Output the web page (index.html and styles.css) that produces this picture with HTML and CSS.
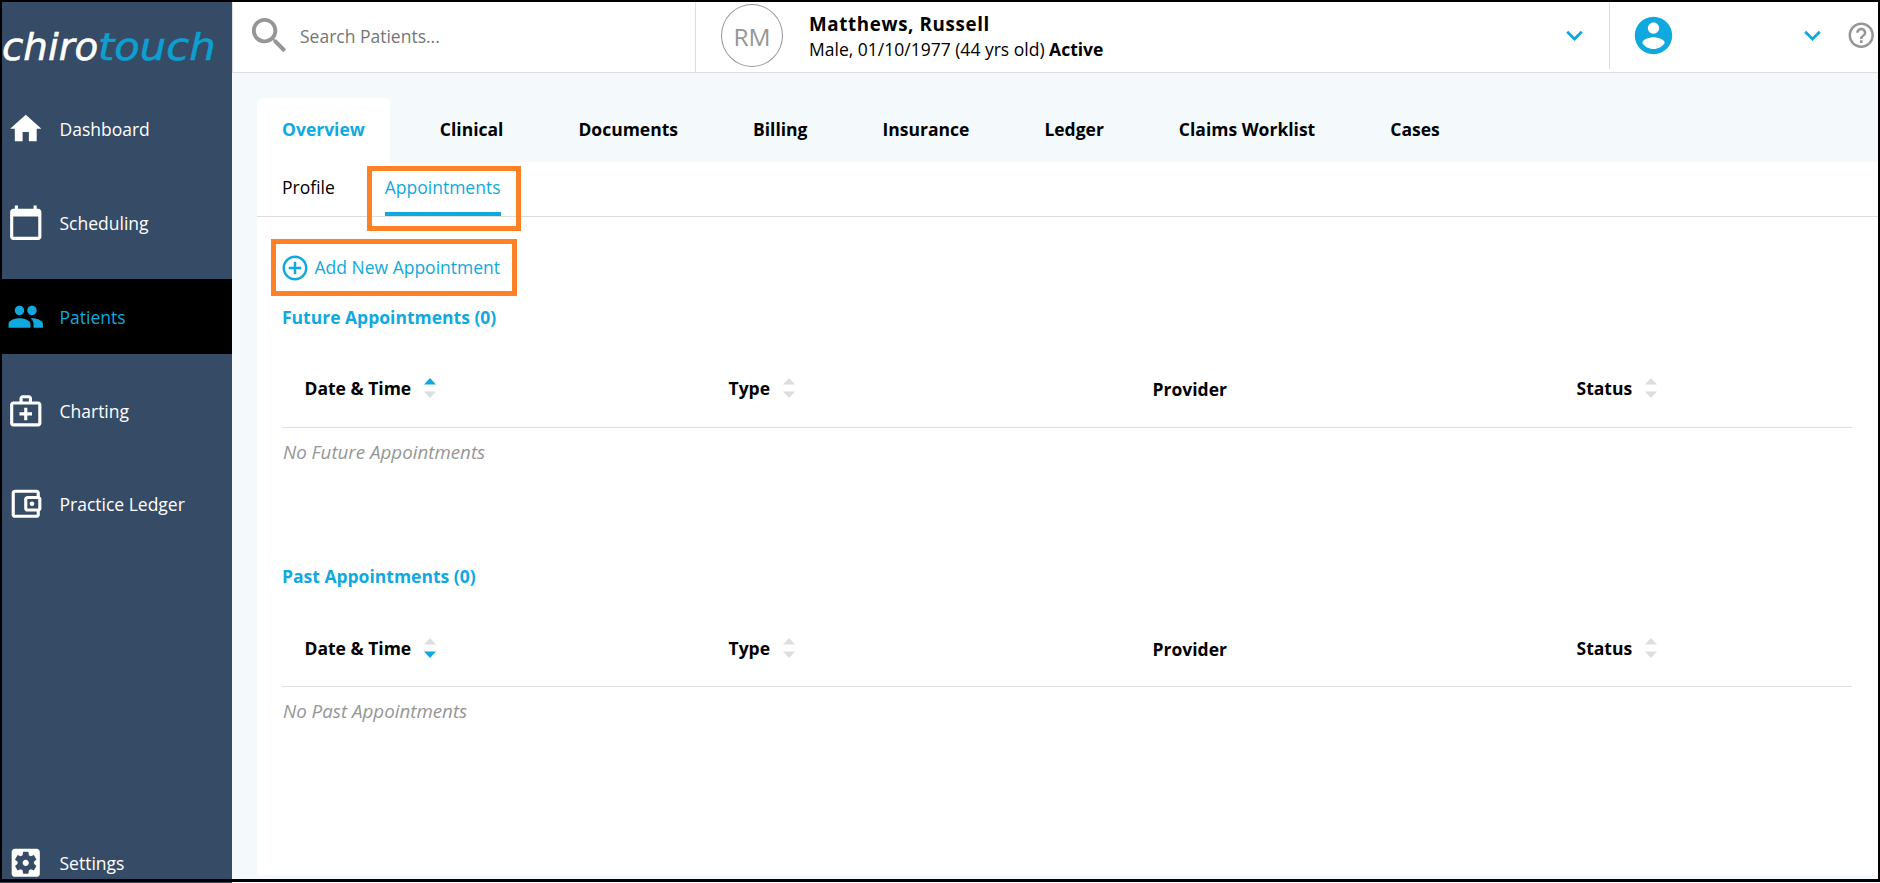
FILE: index.html
```html
<!DOCTYPE html>
<html lang="en">
<head>
<meta charset="utf-8">
<title>ChiroTouch - Appointments</title>
<link rel="stylesheet" href="styles.css">
</head>
<body>
<div class="app">
  <nav class="sidebar">
    <svg class="logo" width="230" height="75" viewBox="0 0 230 75"><text class="logo-a" transform="translate(0 57.5) scale(1.12 1)" textLength="86" lengthAdjust="spacingAndGlyphs">chiro</text><text class="logo-b" transform="translate(96 57.5) scale(1.12 1)" textLength="105" lengthAdjust="spacingAndGlyphs">touch</text></svg>
    <ul class="menu">
      <li class="item"><svg class="icon" viewBox="0 0 24 24"><path d="M10 20v-6h4v6h5v-8h3L12 3 2 12h3v8z"/></svg><span>Dashboard</span></li>
      <li class="item"><svg class="icon" viewBox="0 0 24 24"><path d="M20 3h-1V1h-2v2H7V1H5v2H4c-1.1 0-2 .9-2 2v16c0 1.1.9 2 2 2h16c1.1 0 2-.9 2-2V5c0-1.1-.9-2-2-2zm0 18H4V8h16v13z"/></svg><span>Scheduling</span></li>
      <li class="item active"><svg class="icon" viewBox="0 0 24 24"><path d="M16 11c1.66 0 2.99-1.34 2.99-3S17.66 5 16 5c-1.66 0-3 1.34-3 3s1.34 3 3 3zm-8 0c1.66 0 2.99-1.34 2.99-3S9.66 5 8 5C6.34 5 5 6.34 5 8s1.34 3 3 3zm0 2c-2.33 0-7 1.17-7 3.5V19h14v-2.5c0-2.33-4.67-3.5-7-3.5zm8 0c-.29 0-.62.02-.97.05 1.16.84 1.97 1.97 1.97 3.45V19h6v-2.5c0-2.33-4.67-3.5-7-3.5z"/></svg><span>Patients</span></li>
      <li class="item charting"><svg class="icon" viewBox="0 0 24 24"><path fill-rule="evenodd" d="M20 6h-4V4c0-1.1-.9-2-2-2h-4c-1.1 0-2 .9-2 2v2H4c-1.1 0-2 .9-2 2v12c0 1.1.9 2 2 2h16c1.1 0 2-.9 2-2V8c0-1.1-.9-2-2-2zM10 4h4v2h-4V4zm10 16H4V8h16v12zM13 10h-2v3H8v2h3v3h2v-3h3v-2h-3v-3z"/></svg><span>Charting</span></li>
      <li class="item"><svg class="icon" viewBox="0 0 24 24"><path d="M21 7.28V5c0-1.1-.9-2-2-2H5c-1.11 0-2 .9-2 2v14c0 1.1.89 2 2 2h14c1.1 0 2-.9 2-2v-2.28c.59-.35 1-.98 1-1.72V9c0-.74-.41-1.37-1-1.72zM20 9v6h-7V9h7zM5 19V5h14v2h-6c-1.1 0-2 .9-2 2v6c0 1.1.9 2 2 2h6v2H5z"/><circle cx="16" cy="12" r="1.5"/></svg><span>Practice Ledger</span></li>
    </ul>
    <div class="item settings"><svg class="icon" viewBox="0 0 24 24"><path d="M12 10c-1.1 0-2 .9-2 2s.9 2 2 2 2-.9 2-2-.9-2-2-2zm7-7H5c-1.11 0-2 .9-2 2v14c0 1.1.89 2 2 2h14c1.11 0 2-.9 2-2V5c0-1.1-.89-2-2-2zm-1.75 9c0 .23-.02.46-.05.68l1.48 1.16c.13.11.17.3.08.45l-1.4 2.42c-.09.15-.27.21-.43.15l-1.74-.7c-.36.28-.76.51-1.18.69l-.26 1.85c-.03.17-.18.3-.35.3h-2.8c-.17 0-.32-.13-.35-.29l-.26-1.85c-.43-.18-.82-.41-1.18-.69l-1.74.7c-.16.06-.34 0-.43-.15l-1.4-2.42c-.09-.15-.05-.34.08-.45l1.48-1.16c-.03-.23-.05-.46-.05-.69 0-.23.02-.46.05-.68l-1.48-1.16c-.13-.11-.17-.3-.08-.45l1.4-2.42c.09-.15.27-.21.43-.15l1.74.7c.36-.28.76-.51 1.18-.69l.26-1.85c.03-.17.18-.3.35-.3h2.8c.17 0 .32.13.35.29l.26 1.85c.43.18.82.41 1.18.69l1.74-.7c.16-.06.34 0 .43.15l1.4 2.42c.09.15.05.34-.08.45l-1.48 1.16c.03.23.05.46.05.69z"/></svg><span>Settings</span></div>
  </nav>
  <div class="main">
    <header class="topbar">
      <div class="search"><svg class="search-icon" viewBox="0 0 24 24"><path d="M15.5 14h-.79l-.28-.27C15.41 12.59 16 11.11 16 9.5 16 5.91 13.09 3 9.5 3S3 5.91 3 9.5 5.91 16 9.5 16c1.61 0 3.09-.59 4.23-1.57l.27.28v.79l5 4.99L20.49 19l-4.99-5zm-6 0C7.01 14 5 11.99 5 9.5S7.01 5 9.5 5 14 7.01 14 9.5 11.99 14 9.5 14z"/></svg><span>Search Patients...</span></div>
      <div class="patient">
        <div class="avatar">RM</div>
        <div class="who"><div class="name">Matthews, Russell</div><div class="detail">Male, 01/10/1977 (44 yrs old) <b>Active</b></div></div>
        <svg class="chevron" viewBox="0 0 24 24"><path d="M16.59 8.59 12 13.17 7.41 8.59 6 10l6 6 6-6z"/></svg>
      </div>
      <div class="account">
        <svg class="user" viewBox="0 0 24 24"><path d="M12 2C6.48 2 2 6.48 2 12s4.48 10 10 10 10-4.48 10-10S17.52 2 12 2zm0 3c1.66 0 3 1.34 3 3s-1.34 3-3 3-3-1.34-3-3 1.34-3 3-3zm0 14.2c-2.5 0-4.71-1.28-6-3.22.03-1.99 4-3.08 6-3.08 1.99 0 5.97 1.09 6 3.08-1.29 1.94-3.5 3.22-6 3.22z"/></svg>
        <svg class="chevron" viewBox="0 0 24 24"><path d="M16.59 8.59 12 13.17 7.41 8.59 6 10l6 6 6-6z"/></svg>
        <svg class="help" viewBox="0 0 24 24"><path d="M11 18h2v-2h-2v2zm1-16C6.48 2 2 6.48 2 12s4.48 10 10 10 10-4.48 10-10S17.52 2 12 2zm0 18c-4.41 0-8-3.59-8-8s3.59-8 8-8 8 3.59 8 8-3.59 8-8 8zm0-14c-2.21 0-4 1.79-4 4h2c0-1.1.9-2 2-2s2 .9 2 2c0 2-3 1.75-3 5h2c0-2.25 3-2.5 3-5 0-2.21-1.79-4-4-4z"/></svg>
      </div>
    </header>
    <div class="tabs">
      <div class="tab selected">Overview</div><div class="tab">Clinical</div><div class="tab">Documents</div><div class="tab">Billing</div><div class="tab">Insurance</div><div class="tab">Ledger</div><div class="tab">Claims Worklist</div><div class="tab">Cases</div>
    </div>
    <div class="panel">
      <div class="subtabs"><div class="subtab">Profile</div><div class="subtab current">Appointments<i class="mark mark-tab"></i></div></div>
      <div class="content">
        <div class="add"><svg class="plus" viewBox="0 0 24 24"><path d="M13 7h-2v4H7v2h4v4h2v-4h4v-2h-4V7zm-1-5C6.49 2 2 6.49 2 12s4.49 10 10 10 10-4.49 10-10S17.51 2 12 2zm0 18c-4.41 0-8-3.59-8-8s3.59-8 8-8 8 3.59 8 8-3.59 8-8 8z"/></svg><span>Add New Appointment</span><i class="mark mark-add"></i></div>
        <section class="group">
          <h2>Future Appointments (0)</h2>
          <div class="head">
            <div class="col">Date &amp; Time<svg class="sort asc" viewBox="0 0 12 20"><path class="up" d="M6 0l6 6.5H0z"/><path class="down" d="M0 13.5h12L6 20z"/></svg></div>
            <div class="col">Type<svg class="sort" viewBox="0 0 12 20"><path class="up" d="M6 0l6 6.5H0z"/><path class="down" d="M0 13.5h12L6 20z"/></svg></div>
            <div class="col plain">Provider</div>
            <div class="col">Status<svg class="sort" viewBox="0 0 12 20"><path class="up" d="M6 0l6 6.5H0z"/><path class="down" d="M0 13.5h12L6 20z"/></svg></div>
          </div>
          <p class="empty">No Future Appointments</p>
        </section>
        <section class="group past">
          <h2>Past Appointments (0)</h2>
          <div class="head">
            <div class="col">Date &amp; Time<svg class="sort desc" viewBox="0 0 12 20"><path class="up" d="M6 0l6 6.5H0z"/><path class="down" d="M0 13.5h12L6 20z"/></svg></div>
            <div class="col">Type<svg class="sort" viewBox="0 0 12 20"><path class="up" d="M6 0l6 6.5H0z"/><path class="down" d="M0 13.5h12L6 20z"/></svg></div>
            <div class="col plain">Provider</div>
            <div class="col">Status<svg class="sort" viewBox="0 0 12 20"><path class="up" d="M6 0l6 6.5H0z"/><path class="down" d="M0 13.5h12L6 20z"/></svg></div>
          </div>
          <p class="empty">No Past Appointments</p>
        </section>
      </div>
    </div>
  </div>
  <div class="frame"></div>
</div>
</body>
</html>
```
FILE: styles.css
```css
* { box-sizing: border-box; }
body { margin: 0; font-family: "Open Sans", "Noto Sans", sans-serif; font-size: 17.5px; line-height: 24px; color: #000; }
svg { display: block; flex: none; fill: currentColor; }
.app { position: relative; display: flex; width: 1880px; height: 883px; overflow: hidden; background: #f4f9fc; }
.frame { position: absolute; inset: 0 0 1px 0; border: 2px solid #000; border-bottom-width: 3px; pointer-events: none; }

.sidebar { display: flex; flex-direction: column; width: 232px; padding: 2px 0 0 2px; background: #364c66; color: #fff; }
.logo { font-family: "DejaVu Sans", sans-serif; font-size: 38px; font-style: italic; }
.logo-a { fill: #fff; stroke: #fff; stroke-width: .6; }
.logo-b { fill: #0c9fd0; stroke: #0c9fd0; stroke-width: .6; }
.menu { display: flex; flex-direction: column; gap: 18.75px; margin: 14.5px 0 0; padding: 0; list-style: none; }
.item { display: flex; align-items: center; height: 75px; padding-left: 5px; gap: 15px; }
.item.active { background: #000; color: #10a9df; }
.icon { width: 37.5px; height: 37.5px; }
.charting span { padding-top: 1px; }
.settings { margin-top: auto; margin-bottom: -17px; }

.main { flex: 1; display: flex; flex-direction: column; min-width: 0; }
.topbar { display: flex; height: 73px; padding: 2px 2px 0 0; background: #fff; border-left: 1px solid #dcdee0; border-bottom: 1px solid #dcdee0; }
.search { display: flex; width: 463px; padding: 10px 0 0 13px; gap: 7px; border-right: 1px solid #dcdee0; color: #757575; }
.search span { padding-top: 12px; }
.search-icon { width: 47px; height: 47px; color: #969696; }
.patient { display: flex; width: 914px; height: 67px; align-items: center; padding: 0 18px 0 25px; border-right: 1px solid #dcdee0; }
.avatar { width: 62px; height: 63px; border: 1px solid #969696; border-radius: 50%; color: #969696; font-size: 24.5px; line-height: 63px; text-align: center; }
.who { flex: 1; padding: 0 0 0 26px; }
.name { font-size: 18.75px; font-weight: 700; line-height: 25px; letter-spacing: .63px; }
.detail { padding-top: 1px; margin-bottom: -1px; line-height: 25px; }
.detail b { font-weight: 700; }
.chevron { width: 33px; height: 33px; color: #10a9df; }
.account { flex: 1; display: flex; align-items: center; height: 67px; padding-left: 21px; }
.user { width: 45px; height: 45px; color: #10a9df; }
.account .chevron { margin-left: 119.5px; }
.help { width: 30.5px; height: 30.5px; margin-left: 17px; color: #969696; }

.tabs { display: flex; gap: 25px; padding: 25px 0 0 25px; }
.tab { height: 64px; padding: 0 25px; line-height: 63px; font-weight: 700; }
.tab.selected { background: #fff; border-radius: 6px 6px 0 0; color: #10a9df; }
.panel { height: 713px; margin-left: 25px; background: #fff; }
.subtabs { display: flex; gap: 50px; height: 55px; padding-left: 25px; border-bottom: 1px solid #dcdee0; }
.subtab { position: relative; height: 54px; line-height: 51px; }
.subtab.current { color: #10a9df; border-bottom: 4px solid #10a9df; }
.mark { position: absolute; border: 5px solid #ff8126; }
.mark-tab { left: -18px; top: 4px; width: 154px; height: 65px; }
.mark-add { left: -11px; top: -13px; width: 246px; height: 57px; }
.content { padding: 35px 28px 0 25px; }
.add { position: relative; display: flex; align-items: center; gap: 5px; height: 31px; color: #10a9df; }
.plus { width: 30px; height: 30px; margin-left: -2.5px; }
.add span { padding-bottom: 1px; }
.group { height: 259px; }
h2 { margin: 0; padding-top: 22px; font-size: 17.5px; line-height: 24px; font-weight: 700; color: #10a9df; }
.head { display: grid; grid-template-columns: 424px 424px 424px 1fr; height: 99px; padding-top: 25px; border-bottom: 1px solid #dcdee0; }
.past .head { padding-top: 26px; }
.col { display: flex; align-items: center; gap: 13px; height: 68px; padding-left: 22.5px; font-weight: 700; }
.plain { padding-top: 2px; }
.sort { width: 12px; height: 20px; color: #dcdee0; }
.asc .up, .desc .down { fill: #10a9df; }
.empty { margin: 0; padding: 12px 0 0 1px; font-size: 18.75px; font-style: italic; color: #969696; }
```
